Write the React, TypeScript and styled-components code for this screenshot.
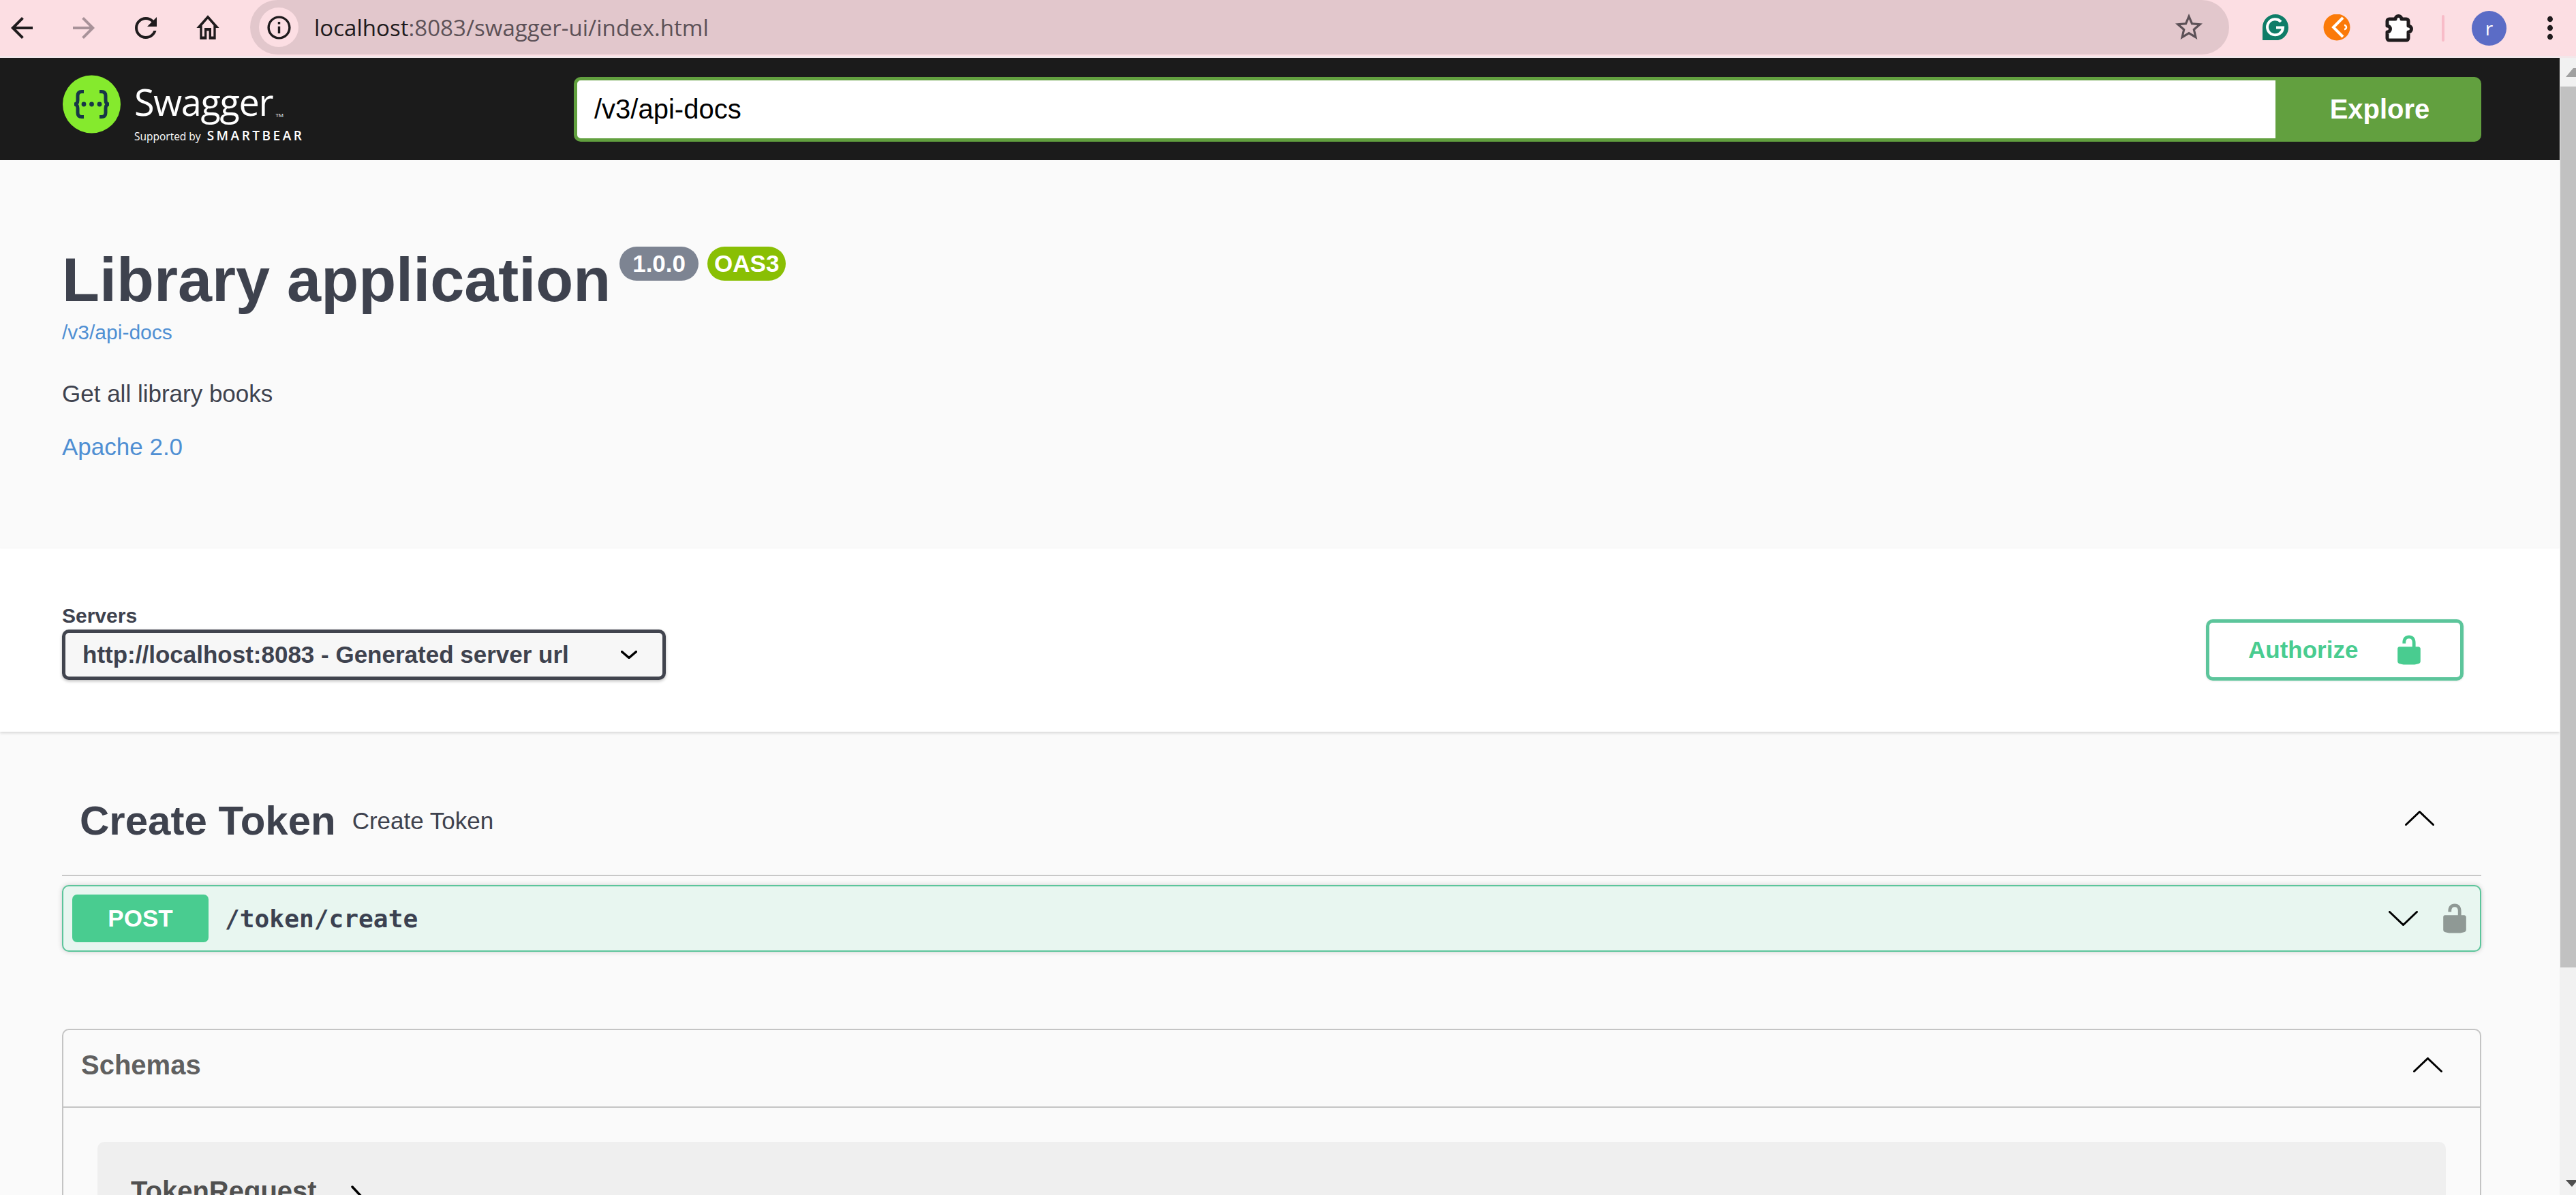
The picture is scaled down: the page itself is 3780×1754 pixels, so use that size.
import React from "react";
import styled, { createGlobalStyle } from "styled-components";

const GlobalStyle = createGlobalStyle`
    html, body {
        margin: 0;
        padding: 0;
        width: 3780px;
        height: 1754px;
        overflow: hidden;
        background: #fafafa;
        font-family: "Liberation Sans", Arial, sans-serif;
    }
    * {
        box-sizing: border-box;
    }
`;

//=========================
// 	  BROWSER CHROME
//=========================

const ChromeBar = styled.div`
    height: 85px;
    display: flex;
    align-items: flex-start;
    background: #fcdee3;
    border-bottom: 3px solid #f3e7ea;
`;

const NavGroup = styled.div`
    display: flex;
    height: 82px;
    margin-left: -14px;
    margin-right: 17px;
`;

const NavButton = styled.div`
    width: 91px;
    height: 82px;
    display: flex;
    align-items: center;
    justify-content: center;
`;

const AddressBar = styled.div`
    flex: 1;
    height: 80px;
    display: flex;
    align-items: center;
    padding-left: 13px;
    background: #e2c7cc;
    border-radius: 40px;
`;

const SiteInfo = styled.div`
    width: 58px;
    height: 58px;
    flex: none;
    border-radius: 50%;
    background: #fcdee3;
    display: flex;
    align-items: center;
    justify-content: center;
`;

const UrlText = styled.span`
    margin-left: 23px;
    font-family: "Open Sans", Roboto, sans-serif;
    font-size: 33.1px;
    color: #5c5157;
    flex: 1;

    b {
        font-weight: 400;
        color: #1f1b1d;
    }
`;

const StarSlot = styled.div`
    margin-right: 35px;
    display: flex;
`;

const ExtensionGroup = styled.div`
    width: 509px;
    height: 82px;
    flex: none;
    display: flex;
    align-items: center;
    padding-left: 49px;
`;

const ExtensionSlot = styled.div<{ $width: number }>`
    width: ${(p) => p.$width}px;
    height: 82px;
    flex: none;
    display: flex;
    align-items: center;
`;

const PipeLine = styled.div`
    width: 4px;
    height: 39px;
    background: #f8bcc8;
    border-radius: 2px;
`;

const Avatar = styled.div`
    width: 51px;
    height: 51px;
    border-radius: 50%;
    background: #5b6cc6;
    color: #fff;
    font-family: "Open Sans", sans-serif;
    font-size: 28px;
    display: flex;
    align-items: center;
    justify-content: center;
`;

const MaterialIcon = ({ d, size = 48, color = "#1f1b1d", height }: { d: string; size?: number; color?: string; height?: number }) => (
    <svg width={size} height={height ?? size} viewBox="0 0 24 24" preserveAspectRatio="none" fill={color}>
        <path d={d} />
    </svg>
);

const GrammarlyIcon = () => (
    <svg width="38" height="40" viewBox="0 0 38 40">
        <path d="M19 0a19 19 0 0 1 19 19 19 19 0 0 1-15 19H0V19A19 19 0 0 1 19 0z" fill="#0f7d68" />
        <path d="M27 11a11.5 11.5 0 1 0 3 8.5H20" fill="none" stroke="#fff" strokeWidth="4" />
    </svg>
);

const OrangeIcon = () => (
    <svg width="40" height="40" viewBox="0 0 40 40">
        <circle cx="20" cy="19" r="19.5" fill="#fb7a09" />
        <path d="M29 5 L15 19 L29 33" fill="none" stroke="#fff" strokeWidth="4" />
        <path d="M31 16 a3 3 0 0 1 0 6" fill="none" stroke="#fff" strokeWidth="2.5" />
    </svg>
);

const PuzzleIcon = () => (
    <svg width="45" height="44" viewBox="0 0 45 44">
        <path
            d="M6 9H15a4.5 4.5 0 0 1 9 0H31a3 3 0 0 1 3 3V19a4.5 4.5 0 0 1 0 9V37a3 3 0 0 1-3 3H6a3 3 0 0 1-3-3V28a4.5 4.5 0 0 0 0-9V12a3 3 0 0 1 3-3z"
            fill="#fff"
            stroke="#1f1b1d"
            strokeWidth="5"
            strokeLinejoin="round"
        />
    </svg>
);

const BrowserChrome = () => (
    <ChromeBar>
        <NavGroup>
            <NavButton>
                <MaterialIcon d="M20 11H7.83l5.59-5.59L12 4l-8 8 8 8 1.41-1.41L7.83 13H20v-2z" />
            </NavButton>
            <NavButton>
                <MaterialIcon color="#a89299" d="M12 4l-1.41 1.41L16.17 11H4v2h12.17l-5.58 5.59L12 20l8-8z" />
            </NavButton>
            <NavButton>
                <MaterialIcon d="M17.65 6.35C16.2 4.9 14.21 4 12 4c-4.42 0-7.99 3.58-7.99 8s3.57 8 7.99 8c3.73 0 6.84-2.55 7.73-6h-2.08c-.82 2.33-3.04 4-5.65 4-3.31 0-6-2.69-6-6s2.69-6 6-6c1.66 0 3.14.69 4.22 1.78L13 11h7V4l-2.35 2.35z" />
            </NavButton>
            <NavButton>
                <MaterialIcon size={40} height={50} d="M12 5.69l5 4.5V18h-2v-6H9v6H7v-7.81l5-4.5M12 3L2 12h3v8h6v-6h2v6h6v-8h3L12 3z" />
            </NavButton>
        </NavGroup>
        <AddressBar>
            <SiteInfo>
                <MaterialIcon size={41} d="M11 7h2v2h-2zm0 4h2v6h-2zm1-9C6.48 2 2 6.48 2 12s4.48 10 10 10 10-4.48 10-10S17.52 2 12 2zm0 18c-4.41 0-8-3.59-8-8s3.59-8 8-8 8 3.59 8 8-3.59 8-8 8z" />
            </SiteInfo>
            <UrlText>
                <b>localhost</b>:8083/swagger-ui/index.html
            </UrlText>
            <StarSlot>
                <MaterialIcon color="#5c5157" d="M22 9.24l-7.19-.62L12 2 9.19 8.63 2 9.24l5.46 4.73L5.82 21 12 17.27 18.18 21l-1.63-7.03L22 9.24zM12 15.4l-3.76 2.27 1-4.28-3.32-2.88 4.38-.38L12 6.1l1.71 4.04 4.38.38-3.32 2.88 1 4.28L12 15.4z" />
            </StarSlot>
        </AddressBar>
        <ExtensionGroup>
            <ExtensionSlot $width={89}>
                <GrammarlyIcon />
            </ExtensionSlot>
            <ExtensionSlot $width={91}>
                <OrangeIcon />
            </ExtensionSlot>
            <ExtensionSlot $width={83}>
                <PuzzleIcon />
            </ExtensionSlot>
            <ExtensionSlot $width={44}>
                <PipeLine />
            </ExtensionSlot>
            <ExtensionSlot $width={91}>
                <Avatar>r</Avatar>
            </ExtensionSlot>
            <ExtensionSlot $width={48}>
                <MaterialIcon height={52} d="M12 8c1.1 0 2-.9 2-2s-.9-2-2-2-2 .9-2 2 .9 2 2 2zm0 2c-1.1 0-2 .9-2 2s.9 2 2 2 2-.9 2-2-.9-2-2-2zm0 6c-1.1 0-2 .9-2 2s.9 2 2 2 2-.9 2-2-.9-2-2-2z" />
            </ExtensionSlot>
        </ExtensionGroup>
    </ChromeBar>
);

//=========================
// 	  	  TOP BAR
//=========================

const PageRow = styled.div`
    display: flex;
    height: 1669px;
`;

const PageColumn = styled.div`
    flex: 1;
    min-width: 0;
    overflow: hidden;
`;

const Topbar = styled.div`
    height: 150px;
    background: #1b1b1b;
    display: flex;
    align-items: center;
    padding: 0 115px 0 92px;
`;

const LogoWrap = styled.div`
    width: 750px;
    flex: none;
    display: flex;
    align-items: center;
    gap: 20px;
`;

const LogoMark = styled.div`
    display: flex;
    margin-bottom: 14px;
`;

const LogoText = styled.div`
    display: flex;
    flex-direction: column;
    padding-top: 8px;
    color: #fff;
    font-family: "Open Sans", sans-serif;
`;

const LogoName = styled.span`
    font-size: 54px;
    line-height: 60px;
    letter-spacing: -1.3px;
    font-weight: 400;
    display: flex;
    align-items: flex-end;

    small {
        font-size: 8px;
        line-height: 20px;
        margin-left: 4px;
        letter-spacing: 0;
    }
`;

const LogoSupport = styled.span`
    margin-top: 10px;
    font-size: 15.5px;
    line-height: 20px;
    display: flex;
    align-items: baseline;
    gap: 9px;

    b {
        font-size: 19px;
        font-weight: 600;
        letter-spacing: 3.5px;
    }
`;

const SearchForm = styled.div`
    flex: 1;
    height: 95px;
    display: flex;
`;

const SearchInput = styled.div`
    flex: 1;
    background: #fff;
    border: 5px solid #62a03f;
    border-right: none;
    border-radius: 10px 0 0 10px;
    font-size: 40px;
    color: #000;
    display: flex;
    align-items: center;
    padding-left: 25px;
`;

const ExploreButton = styled.div`
    width: 302px;
    background: #62a03f;
    color: #fff;
    font-size: 40px;
    font-weight: 700;
    border-radius: 0 10px 10px 0;
    display: flex;
    align-items: center;
    justify-content: center;
    padding-left: 4px;
`;

const SwaggerMark = () => (
    <svg width="85" height="86" viewBox="0 0 85 86">
        <circle cx="42.5" cy="43" r="42.5" fill="#85ea2d" />
        <path
            d="M31 24.5h-3c-4 0-6 2-6 6v6.500c0 4-2 6-5 6 3 0 5 2 5 6v6.500c0 4 2 6 6 6h3M54 24.500h3c4 0 6 2 6 6v6.500c0 4 2 6 5 6-3 0-5 2-5 6v6.500c0 4-2 6-6 6h-3"
            fill="none"
            stroke="#173647"
            strokeWidth="5"
        />
        <circle cx="31" cy="43" r="3.4" fill="#173647" />
        <circle cx="42.5" cy="43" r="3.4" fill="#173647" />
        <circle cx="54" cy="43" r="3.4" fill="#173647" />
    </svg>
);

const TopbarSection = () => (
    <Topbar>
        <LogoWrap>
            <LogoMark>
                <SwaggerMark />
            </LogoMark>
            <LogoText>
                <LogoName>
                    Swagger<small>TM</small>
                </LogoName>
                <LogoSupport>
                    Supported by <b>SMARTBEAR</b>
                </LogoSupport>
            </LogoText>
        </LogoWrap>
        <SearchForm>
            <SearchInput>/v3/api-docs</SearchInput>
            <ExploreButton>Explore</ExploreButton>
        </SearchForm>
    </Topbar>
);

//=========================
// 	  	    INFO
//=========================

const InfoSection = styled.div`
    height: 570px;
    background: #fafafa;
    padding: 131px 0 0 91px;
    color: #3e424e;
`;

const TitleRow = styled.div`
    display: flex;
    align-items: flex-start;
`;

const Title = styled.h1`
    margin: 0;
    font-size: 90px;
    line-height: 90px;
    font-weight: 700;
    color: #3e424e;
`;

const Badge = styled.span<{ $color: string; $pad: number; $gap: number }>`
    height: 50px;
    margin: -4px 0 0 ${(p) => p.$gap}px;
    padding: 0 ${(p) => p.$pad}px;
    border-radius: 25px;
    background: ${(p) => p.$color};
    color: #fff;
    font-size: 35px;
    font-weight: 700;
    display: flex;
    align-items: center;
`;

const DocsLink = styled.a`
    display: block;
    margin-top: 17px;
    font-size: 30px;
    line-height: 30px;
    color: #4f8fd3;
`;

const Description = styled.p`
    margin: 57px 0 0;
    font-size: 35px;
    line-height: 35px;
    color: #3e424e;
`;

const LicenseLink = styled.a`
    display: block;
    margin-top: 43px;
    font-size: 35px;
    line-height: 35px;
    color: #4f8fd3;
`;

//=========================
// 	  	   SERVERS
//=========================

const SchemeContainer = styled.div`
    height: 269px;
    background: #fff;
    box-shadow: 0 2px 4px 0 rgba(0, 0, 0, 0.15);
    position: relative;
    display: flex;
    align-items: flex-start;
    justify-content: space-between;
    padding: 84px 141px 0 91px;
`;

const ServersLabel = styled.div`
    font-size: 30px;
    line-height: 29px;
    font-weight: 700;
    color: #3e424e;
`;

const ServerSelect = styled.div`
    width: 886px;
    height: 74px;
    margin-top: 6px;
    border: 5px solid #41444e;
    border-radius: 10px;
    background: #f7f7f7;
    box-shadow: 0 2px 4px 0 rgba(0, 0, 0, 0.25);
    display: flex;
    align-items: center;
    justify-content: space-between;
    padding: 0 37px 0 25px;
    font-size: 35px;
    font-weight: 700;
    color: #3e424e;
`;

const AuthorizeButton = styled.div`
    width: 378px;
    height: 90px;
    margin-top: 20px;
    border: 5px solid #5cc59b;
    border-radius: 10px;
    background: #fff;
    box-shadow: 0 1px 3px rgba(0, 0, 0, 0.1);
    display: flex;
    align-items: center;
    padding-left: 57px;
    gap: 51px;
    color: #49cc90;
    font-size: 35px;
    font-weight: 700;
`;

const UnlockedIcon = ({ color }: { color: string }) => (
    <svg width="48" height="48" viewBox="0 0 20 20" fill={color}>
        <path d="M15.8 8H14V5.6C14 2.703 12.665 1 10 1 7.334 1 6 2.703 6 5.6V6h2v-.801C8 3.754 8.797 3 10 3c1.203 0 2 .754 2 2.199V8H4c-.553 0-1 .646-1 1.199V17c0 .549.428 1.139.951 1.307l1.197.387C5.672 18.861 6.55 19 7.1 19h5.8c.549 0 1.428-.139 1.951-.307l1.196-.387c.524-.167.953-.757.953-1.306V9.199C17 8.646 16.352 8 15.8 8z" />
    </svg>
);

const Chevron = ({ up, width = 43, height = 22, stroke = 3 }: { up?: boolean; width?: number; height?: number; stroke?: number }) => (
    <svg width={width} height={height} viewBox={`0 0 ${width} ${height}`} fill="none" stroke="#000" strokeWidth={stroke} strokeLinecap="round">
        <polyline points={up ? `1.5,${height - 1.5} ${width / 2},1.5 ${width - 1.5},${height - 1.5}` : `1.5,1.5 ${width / 2},${height - 1.5} ${width - 1.5},1.5`} />
    </svg>
);

//=========================
// 	  	OPERATIONS
//=========================

const MainSection = styled.div`
    padding: 0 115px 0 91px;
    background: #fafafa;
`;

const TagHeader = styled.div`
    display: flex;
    align-items: center;
    padding: 101px 69px 50px 26px;
    border-bottom: 2px solid #c8c8c8;
    color: #3e424e;
`;

const TagTitle = styled.h3`
    margin: 0;
    font-size: 60px;
    line-height: 59px;
    font-weight: 700;
`;

const TagDescription = styled.span`
    margin-left: 24px;
    flex: 1;
    font-size: 35px;
    line-height: 35px;
`;

const ChevronSlot = styled.div`
    display: flex;
    margin-bottom: 8px;
`;

const Opblock = styled.div`
    height: 98px;
    margin-top: 13px;
    display: flex;
    align-items: center;
    padding: 0 13px 0 13px;
    border: 2.4px solid #5cc59b;
    border-radius: 10px;
    background: #e8f6f0;
    box-shadow: 0 0 7px rgba(0, 0, 0, 0.19);
`;

const MethodTag = styled.div`
    width: 200px;
    height: 70px;
    flex: none;
    border-radius: 7px;
    background: #49cc90;
    color: #fff;
    font-size: 35px;
    font-weight: 700;
    display: flex;
    align-items: center;
    justify-content: center;
`;

const PathText = styled.span`
    margin-left: 24px;
    flex: 1;
    font-family: "DejaVu Sans Mono", monospace;
    font-size: 36.2px;
    font-weight: 700;
    color: #3b4151;
`;

const OpChevron = styled.div`
    display: flex;
    margin-right: 30px;
`;

const SchemasBox = styled.div`
    margin-top: 113px;
    height: 400px;
    border: 2.4px solid #c4c4c4;
    border-radius: 10px;
`;

const SchemasHeader = styled.div`
    height: 114px;
    display: flex;
    align-items: center;
    justify-content: space-between;
    padding: 0 55px 10px 26px;
    border-bottom: 2.4px solid #c4c4c4;
`;

const SchemasTitle = styled.h4`
    margin: 0;
    font-size: 40px;
    font-weight: 700;
    color: #606060;
`;

const ModelContainer = styled.div`
    margin: 50px 50px 0;
    height: 200px;
    padding: 50px 0 0 49px;
    background: #efefef;
    border-radius: 10px;
    display: flex;
    align-items: flex-start;
    gap: 50px;
    font-size: 40px;
    font-weight: 700;
    color: #505050;
`;

const ModelArrow = styled.div`
    display: flex;
    margin-top: 14px;
`;

//=========================
// 	  	 SCROLLBAR
//=========================

const ScrollTrack = styled.div`
    width: 24px;
    flex: none;
    background: #f1f1f1;
    display: flex;
    flex-direction: column;
    align-items: flex-end;
`;

const ScrollArrowBox = styled.div<{ $height: number; $pad: string }>`
    width: 100%;
    height: ${(p) => p.$height}px;
    padding: ${(p) => p.$pad};
    display: flex;
    justify-content: flex-end;
`;

const ScrollThumb = styled.div`
    width: 23px;
    height: 1293px;
    background: #c1c1c1;
`;

const ScrollFill = styled.div`
    flex: 1;
`;

const App = () => (
    <>
        <GlobalStyle />
        <BrowserChrome />
        <PageRow>
            <PageColumn>
                <TopbarSection />
                <InfoSection>
                    <TitleRow>
                        <Title>Library application</Title>
                        <Badge $color="#7d8492" $pad={19} $gap={13}>
                            1.0.0
                        </Badge>
                        <Badge $color="#89bf04" $pad={10} $gap={13}>
                            OAS3
                        </Badge>
                    </TitleRow>
                    <DocsLink>/v3/api-docs</DocsLink>
                    <Description>Get all library books</Description>
                    <LicenseLink>Apache 2.0</LicenseLink>
                </InfoSection>
                <SchemeContainer>
                    <div>
                        <ServersLabel>Servers</ServersLabel>
                        <ServerSelect>
                            http://localhost:8083 - Generated server url
                            <Chevron width={24} height={12} stroke={3.5} />
                        </ServerSelect>
                    </div>
                    <AuthorizeButton>
                        Authorize
                        <UnlockedIcon color="#49cc90" />
                    </AuthorizeButton>
                </SchemeContainer>
                <MainSection>
                    <TagHeader>
                        <TagTitle>Create Token</TagTitle>
                        <TagDescription>Create Token</TagDescription>
                        <ChevronSlot>
                            <Chevron up />
                        </ChevronSlot>
                    </TagHeader>
                    <Opblock>
                        <MethodTag>POST</MethodTag>
                        <PathText>/token/create</PathText>
                        <OpChevron>
                            <Chevron />
                        </OpChevron>
                        <UnlockedIcon color="#8f9995" />
                    </Opblock>
                    <SchemasBox>
                        <SchemasHeader>
                            <SchemasTitle>Schemas</SchemasTitle>
                            <Chevron up />
                        </SchemasHeader>
                        <ModelContainer>
                            TokenRequest
                            <ModelArrow>
                                <svg width="18" height="34" viewBox="0 0 18 34" fill="none" stroke="#000" strokeWidth="3.5" strokeLinecap="round">
                                    <polyline points="2,2 16,17 2,32" />
                                </svg>
                            </ModelArrow>
                        </ModelContainer>
                    </SchemasBox>
                </MainSection>
            </PageColumn>
            <ScrollTrack>
                <ScrollArrowBox $height={42} $pad="15px 0 0 0">
                    <svg width="15" height="13" viewBox="0 0 15 13">
                        <polygon points="0,13 11,0 15,0 15,13" fill="#a0a0a0" />
                    </svg>
                </ScrollArrowBox>
                <ScrollThumb />
                <ScrollFill />
                <ScrollArrowBox $height={22} $pad="0">
                    <svg width="15" height="10" viewBox="0 0 15 10">
                        <polygon points="0,0 15,0 15,3 9,10" fill="#505050" />
                    </svg>
                </ScrollArrowBox>
            </ScrollTrack>
        </PageRow>
    </>
);

export default App;
